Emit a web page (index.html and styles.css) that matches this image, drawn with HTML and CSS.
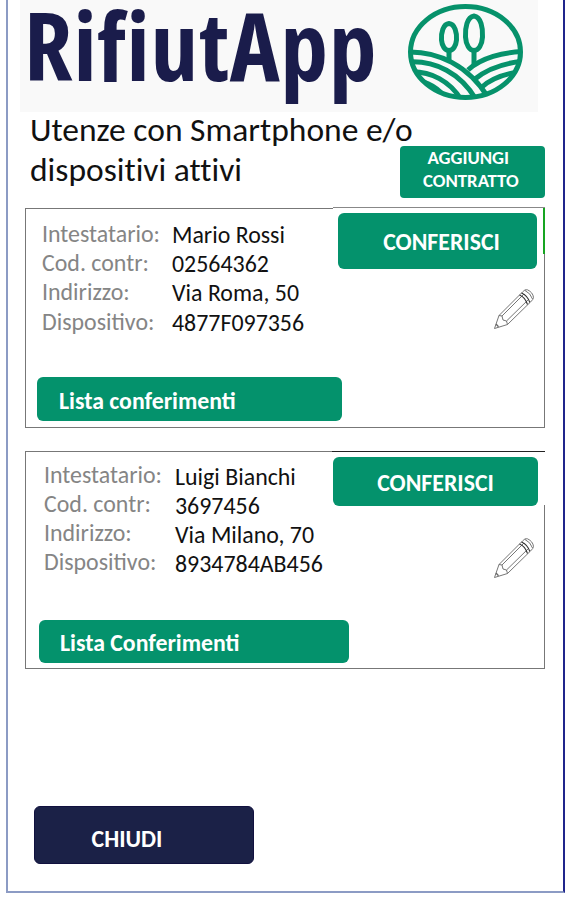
FILE: index.html
```html
<!DOCTYPE html>
<html lang="it">
<head>
<meta charset="utf-8">
<title>RifiutApp</title>
<link rel="stylesheet" href="styles.css">
</head>
<body>
<svg class="sprite" aria-hidden="true">
  <symbol id="pencil" viewBox="0 0 42 42">
    <g fill="none" stroke="#666" stroke-width=".9" stroke-linejoin="round">
      <path d="M1.500 40.500 L6 27.500 L29.500 4 Q32 .8 34.500 1.800 Q40 4.500 40.500 9.500 Q40.300 11.500 37.500 14 L14.500 36.500 Z"/>
      <path d="M6 27.500 L9 28 L10 32 L13.500 33 L14.500 36.500 M9 28 L31 6 M13.500 33 L36 11"/>
      <path d="M3 36 L5.500 38.800" stroke-width="1.300"/>
      <path d="M26.500 7 Q32 9 34.500 16.500 M28.500 5 Q34.500 7.500 36.800 14.500" stroke="#333" stroke-width="1.100"/>
      <path d="M32 2.500 Q37.500 5 39.500 11"/>
    </g>
  </symbol>
</svg>
<main class="screen">
  <header class="brand">
    <h1 class="brand-name">RifiutApp</h1>
    <svg class="brand-logo" viewBox="0 0 118 98" fill="none" stroke="#06926b" stroke-width="5">
      <clipPath id="disc"><ellipse cx="58.500" cy="49" rx="56" ry="46.500"/></clipPath>
      <g clip-path="url(#disc)">
        <path d="M0 49 C30 48 62 62 82 96"/>
        <path d="M0 59 C28 57 54 70 70 98"/>
        <path d="M0 69 C24 67 44 79 55 98"/>
        <path d="M6 74 C22 76 36 84 43 98 L10 96 Z" fill="#06926b" stroke="none"/>
        <path d="M118 48.500 C96 49 74 55 61 67"/>
        <path d="M118 58 C96 60 80 66 68 76"/>
        <path d="M118 68 C100 70 86 74 75 84"/>
        <path d="M110 76 C98 79 88 84 81 92 L100 92 Z" fill="#06926b" stroke="none"/>
      </g>
      <path d="M42 47 V58 M67 47 V61"/>
      <path d="M42 20.500 C48 21 50 30 49.500 37 C49 43 46 47.500 42 47.500 C38 47.500 35 43 34.500 37 C34 30 36 21 42 20.500 Z"/>
      <path d="M67 13 C74 14 76 25 75.500 34 C75 42 71.500 47.500 67 47.500 C62.500 47.500 59 42 58.500 34 C58 25 60 14 67 13 Z"/>
      <ellipse cx="58.500" cy="49" rx="55" ry="45.500"/>
    </svg>
  </header>

  <section class="intro">
    <h2 class="heading">Utenze con Smartphone e/o<br>dispositivi attivi</h2>
    <button class="btn btn-add"><span class="add-first">AGGIUNGI</span><span>CONTRATTO</span></button>
  </section>

  <article class="card card-first">
    <div class="labels">Intestatario:<br>Cod. contr:<br>Indirizzo:<br>Dispositivo:</div>
    <div class="values">Mario Rossi<br>02564362<br>Via Roma, 50<br>4877F097356</div>
    <div class="actions">
      <button class="btn btn-give">CONFERISCI</button>
      <svg class="pencil"><use href="#pencil"/></svg>
    </div>
    <button class="btn btn-list">Lista conferimenti</button>
  </article>

  <article class="card card-second">
    <div class="labels">Intestatario:<br>Cod. contr:<br>Indirizzo:<br>Dispositivo:</div>
    <div class="values">Luigi Bianchi<br>3697456<br>Via Milano, 70<br>8934784AB456</div>
    <div class="actions">
      <button class="btn btn-give">CONFERISCI</button>
      <svg class="pencil"><use href="#pencil"/></svg>
    </div>
    <button class="btn btn-list">Lista Conferimenti</button>
  </article>

  <button class="btn btn-close">CHIUDI</button>
</main>
</body>
</html>
```
FILE: styles.css
```css
* { box-sizing: border-box; }

body {
  margin: 0;
  background: #fff;
  color: #111;
  font-family: Carlito, Calibri, Lato, sans-serif;
  font-size: 23.9px;
  line-height: 29.2px;
}

.sprite { display: block; width: 0; height: 0; }

.screen {
  width: 559px;
  height: 893px;
  margin-left: 6px;
  border: 2px solid #8c9bc4;
  border-top: 0;
  border-right-color: #20258c;
  display: flex;
  flex-direction: column;
  align-items: flex-start;
}

.brand {
  width: 518px;
  height: 112px;
  margin-left: 12px;
  background: #f9f9f9;
  display: flex;
  align-items: flex-start;
}

.brand-name {
  width: 387px;
  margin: 0;
  padding-left: 4px;
  color: #1a1c4b;
  font: 700 95px/88px "Open Sans", sans-serif;
  font-stretch: 75%;
  letter-spacing: .8px;
  white-space: nowrap;
}

.brand-logo { width: 118px; height: 98px; margin-top: 3px; flex: none; }

.intro {
  height: 95px;
  margin: -2px 0 0 22px;
  display: flex;
}

.heading {
  width: 369.5px;
  margin: 0;
  font-size: 33.5px;
  font-weight: 400;
  font-variant-ligatures: none;
  line-height: 40.2px;
  white-space: nowrap;
}

.btn {
  display: block;
  margin: 0;
  padding: 0;
  border: 0;
  border-radius: 6px;
  background: #04926c;
  color: #fff;
  font: 700 23.8px/30px Carlito, Calibri, Lato, sans-serif;
  white-space: nowrap;
}

.btn-add {
  width: 145.5px;
  height: 51.5px;
  margin-top: 36px;
  padding: 0 3px 5px 0;
  border-radius: 4px;
  font-size: 18.8px;
  line-height: 23px;
}

.btn-add span { display: block; }
.btn-add .add-first { padding-right: 5px; }

.card {
  position: relative;
  width: 520px;
  margin-left: 17px;
  border: 1.500px solid #777;
  display: grid;
  grid-template-rows: 1fr auto;
}

.card-first {
  height: 219.5px;
  margin-top: 3px;
  grid-template-columns: 129.5px 166px 1fr;
}

.card-second {
  height: 218.5px;
  margin-top: 23px;
  border-right: 0;
  grid-template-columns: 131.5px 160px 1fr;
}

.card::before, .card::after { content: ""; position: absolute; }

/* raised right end of the top rule */
.card-first::before {
  top: -2.500px; right: -1px; width: 212px; height: 2.500px;
  border-top: 1.500px solid #888;
  background: #fff;
}
.card-first::after {
  top: -1px; right: -1px; width: 2px; height: 46px;
  background: #16a521;
}
.card-second::before {
  top: -1px; right: 0; width: 213px; height: 1px;
  background: #222;
}
.card-second::after {
  top: 53px; right: 0; bottom: 0; width: 1px;
  background: #777;
}

.labels { padding-left: 16px; color: #858585; }
.values { padding-left: 16.5px; white-space: nowrap; }
.card-first .labels { padding-top: 10px; }
.card-first .values { padding-top: 11px; }
.card-second .labels { padding-top: 8px; padding-left: 18px; }
.card-second .values { padding-top: 10px; padding-left: 17.5px; }

.card-first .btn-give { width: 199px; height: 56px; margin: 4px 0 0 16px; padding: 2px 0 0 9px; }
.card-second .btn-give { width: 205px; height: 49.5px; margin: 5px 0 0 15px; padding: 4px 0 0 1px; }

.pencil { display: block; width: 42px; height: 42px; }
.card-first .pencil { margin: 19px 0 0 171px; }
.card-second .pencil { margin: 31px 0 0 175px; }

.btn-list {
  grid-column: 1 / -1;
  justify-self: start;
  height: 43.5px;
  padding-top: 5px;
  text-align: left;
}
.card-first .btn-list { width: 304.5px; margin: 0 0 6px 11px; padding-left: 22px; }
.card-second .btn-list { width: 310px; margin: 0 0 5px 13px; padding-left: 21px; padding-top: 3px; }

.btn-close {
  width: 220px;
  height: 58.5px;
  margin: 136.500px 0 0 26px;
  padding: 8px 34px 0 0;
  background: #1b2147;
  border: 1px solid #11113f;
}
```
